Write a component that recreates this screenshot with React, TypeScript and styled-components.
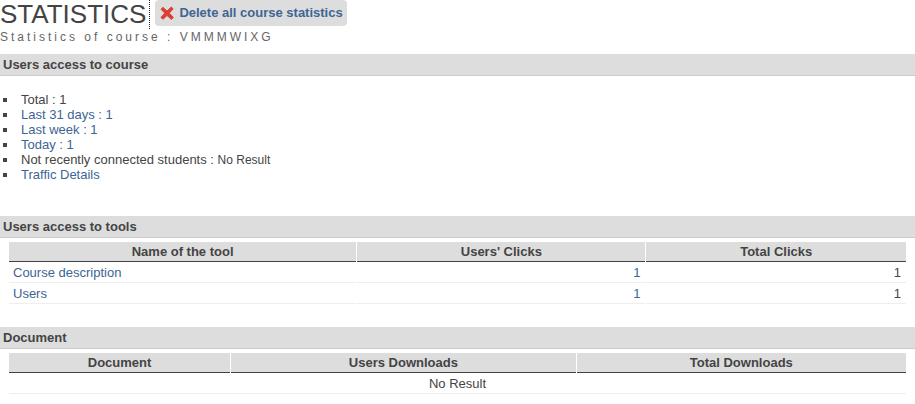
import React from "react";
import styled, { createGlobalStyle } from "styled-components";

const GlobalStyle = createGlobalStyle`
  body {
    margin: 0;
    background: #fff;
    color: #444;
    font-family: "Liberation Sans", Arial, Helvetica, sans-serif;
    font-size: 13px;
    line-height: 15px;
  }
`;

const Page = styled.main`
  display: flex;
  flex-direction: column;
`;

const TitleRow = styled.header`
  display: flex;
  align-items: flex-start;
  height: 29px;
`;

const Title = styled.h1`
  margin: 0;
  padding-right: 3px;
  border-right: 1px dotted #222;
  font-size: 26px;
  font-weight: 400;
  line-height: 29px;
`;

const DeleteButton = styled.button`
  display: flex;
  align-items: center;
  gap: 4px;
  height: 26px;
  margin-left: 5px;
  padding: 0 4px 1px;
  border: 0;
  border-radius: 4px;
  background: #ddd;
  color: #3d6594;
  font: inherit;
  font-weight: 700;
  cursor: pointer;
`;

const Subtitle = styled.p`
  margin: 0;
  color: #666;
  font-size: 12px;
  line-height: 16px;
  letter-spacing: 3px;
`;

const SectionTitle = styled.h2<{ $gap: number }>`
  margin: ${(p) => p.$gap}px 0 0;
  padding: 3px;
  border-bottom: 1px solid #ccc;
  background: #ddd;
  font-size: 13px;
  font-weight: 700;
  line-height: 15px;
`;

const Link = styled.a`
  color: #3d6594;
  text-decoration: none;
`;

const StatList = styled.ul`
  margin: 16px 0 0;
  padding: 0;
  list-style: none;
`;

const StatItem = styled.li`
  display: flex;
  align-items: center;
  gap: 14px;
  padding-left: 3px;

  &::before {
    content: "";
    width: 4px;
    height: 4px;
    background: #444;
  }
`;

const Small = styled.small`
  font-size: 12px;
  line-height: 1;
`;

const TableArea = styled.div`
  padding: 4px 8px 0;
`;

const Table = styled.table`
  width: 100%;
  table-layout: fixed;
  border-collapse: separate;
  border-spacing: 1px 0;
`;

const HeadCell = styled.th<{ $width: string }>`
  width: ${(p) => p.$width};
  box-sizing: border-box;
  padding: 2px 4px;
  border-bottom: 1px solid #444;
  background: #ddd;
  font-weight: 700;
`;

const Cell = styled.td<{ $align?: "left" | "right" | "center" }>`
  padding: 3px ${(p) => (p.$align === "right" ? 5 : 4)}px 2px 4px;
  border-bottom: 1px solid #eee;
  text-align: ${(p) => p.$align ?? "left"};
`;

const DeleteIcon = () => (
  <svg width="16" height="16" viewBox="0 0 16 16" aria-hidden="true">
    <path
      d="M4 2.2 8 6l4.2-4 2 1.8L10.3 8.200l4.100 4.200-2 2L8 10.500l-3.900 3.700-2.200-1.800L5.800 8.200 2 4.200z"
      fill="#e23b31"
      stroke="#c9463d"
      strokeWidth="0.9"
      strokeLinejoin="round"
    />
  </svg>
);

const tools = [
  { name: "Course description", users: 1, total: 1 },
  { name: "Users", users: 1, total: 1 },
];

export default function App() {
  return (
    <>
      <GlobalStyle />
      <Page>
        <TitleRow>
          <Title>STATISTICS</Title>
          <DeleteButton type="button">
            <DeleteIcon />
            Delete all course statistics
          </DeleteButton>
        </TitleRow>
        <Subtitle>Statistics of course : VMMMWIXG</Subtitle>

        <SectionTitle $gap={9}>Users access to course</SectionTitle>
        <StatList>
          <StatItem>Total : 1</StatItem>
          <StatItem><Link href="#month">Last 31 days : 1</Link></StatItem>
          <StatItem><Link href="#week">Last week : 1</Link></StatItem>
          <StatItem><Link href="#today">Today : 1</Link></StatItem>
          <StatItem>
            <span>Not recently connected students : <Small>No Result</Small></span>
          </StatItem>
          <StatItem><Link href="#traffic">Traffic Details</Link></StatItem>
        </StatList>

        <SectionTitle $gap={34}>Users access to tools</SectionTitle>
        <TableArea>
          <Table>
            <thead>
              <tr>
                <HeadCell scope="col" $width="38.8%">Name of the tool</HeadCell>
                <HeadCell scope="col" $width="32.2%">Users' Clicks</HeadCell>
                <HeadCell scope="col" $width="29%">Total Clicks</HeadCell>
              </tr>
            </thead>
            <tbody>
              {tools.map((tool) => (
                <tr key={tool.name}>
                  <Cell><Link href="#tool">{tool.name}</Link></Cell>
                  <Cell $align="right"><Link href="#clicks">{tool.users}</Link></Cell>
                  <Cell $align="right">{tool.total}</Cell>
                </tr>
              ))}
            </tbody>
          </Table>
        </TableArea>

        <SectionTitle $gap={23}>Document</SectionTitle>
        <TableArea>
          <Table>
            <thead>
              <tr>
                <HeadCell scope="col" $width="24.7%">Document</HeadCell>
                <HeadCell scope="col" $width="38.5%">Users Downloads</HeadCell>
                <HeadCell scope="col" $width="36.8%">Total Downloads</HeadCell>
              </tr>
            </thead>
            <tbody>
              <tr>
                <Cell colSpan={3} $align="center">No Result</Cell>
              </tr>
            </tbody>
          </Table>
        </TableArea>
      </Page>
    </>
  );
}
